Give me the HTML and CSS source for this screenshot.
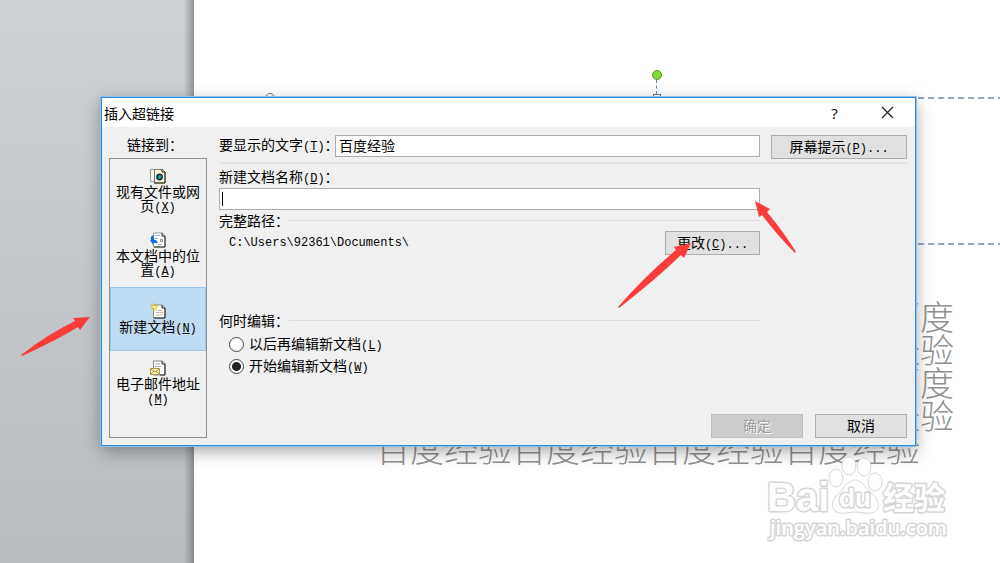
FILE: index.html
```html
<!DOCTYPE html>
<html lang="zh-CN">
<head>
    <meta charset="UTF-8">
    <meta name="viewport" content="width=device-width, initial-scale=1.0">
    <title>插入超链接</title>
    <link rel="stylesheet" href="styles.css">
</head>
<body>
    <div class="workspace"></div>
    <main class="slide">
        <div class="placeholder">
            <span class="corner"></span>
            <span class="rotate"></span>
            <span class="handle"></span>
        </div>
        <div class="slide-text">
            <p>百度<br>经验<br>百度<br>经验</p>
            <p class="last">百度经验百度经验百度经验百度经验</p>
        </div>
    </main>

    <form class="dialog" role="dialog" aria-labelledby="dialog-title">
        <div class="titlebar">
            <h1 id="dialog-title">插入超链接</h1>
            <button type="button" class="title-btn">?</button>
            <button type="button" class="title-btn" aria-label="关闭">
                <svg width="13" height="13" viewBox="0 0 13 13"><path d="M1 1L12 12M12 1L1 12" stroke="#222" stroke-width="1.2"/></svg>
            </button>
        </div>
        <div class="dialog-body">
            <div class="link-to">
                <div class="link-label">链接到：</div>
                <div class="link-list">
                    <button type="button" class="link-item">
                        <svg width="16" height="16" viewBox="0 0 16 16">
                            <path d="M.5 1.500h6v12h-6z" fill="#f4f4f0" stroke="#999"/>
                            <path d="M4.500 1.500h8l2.500 2.500v11H4.500z" fill="#fff8c8" stroke="#777"/>
                            <path d="M15 4v11H4M12 1v3h3" fill="none" stroke="#222"/>
                            <circle cx="9.500" cy="9" r="3.400" fill="#12305c"/>
                            <path d="M8 8l2-1 1.500 1.500-1 2-2 .5z" fill="#1fae8a"/>
                        </svg>
                        <span>现有文件或网<br>页<kbd>(<u>X</u>)</kbd></span>
                    </button>
                    <button type="button" class="link-item">
                        <svg width="16" height="16" viewBox="0 0 16 16">
                            <path d="M3.500 1h9l2.500 3v11H3.500z" fill="#fff" stroke="#999"/>
                            <path d="M15 4v11H4M12 1v3h3" fill="none" stroke="#222"/>
                            <path d="M5 3.500h5M5 6.500h3M8 12.500h4" stroke="#8ab6f0"/>
                            <path d="M10.500 7.500h2v2h-2z" fill="#fff" stroke="#888"/>
                            <path d="M3.500 3Q0 4 1 8L0 8l3 5v-2h5L6 8H4.500Q3 6 3.500 3z" fill="#1767d8"/>
                        </svg>
                        <span>本文档中的位<br>置<kbd>(<u>A</u>)</kbd></span>
                    </button>
                    <button type="button" class="link-item selected">
                        <svg width="16" height="16" viewBox="0 0 16 16">
                            <path d="M3.500 2h9L15 5v10H3.500z" fill="#fffdf2" stroke="#888"/>
                            <path d="M15 5v10H4M12 2v3h3" fill="none" stroke="#222"/>
                            <path d="M8 7.500h4M6 9.500h7M6 12h7" stroke="#bbb"/>
                            <path d="M4 0v8M0 4h8M1 1l6 6M7 1L1 7" stroke="#d9b526"/>
                            <circle cx="4" cy="4" r="1.500" fill="#fff6a0"/>
                        </svg>
                        <span>新建文档<kbd>(<u>N</u>)</kbd></span>
                    </button>
                    <button type="button" class="link-item">
                        <svg width="16" height="16" viewBox="0 0 16 16">
                            <path d="M3.500 1h9L15 4v11H3.500z" fill="#fff" stroke="#888"/>
                            <path d="M15 4v11h-5M12 1v3h3" fill="none" stroke="#222"/>
                            <path d="M5 4h5M5 6.500h6" stroke="#aaa"/>
                            <path d="M.5 8.500h9v6h-9z" fill="#fdf3a8" stroke="#a99750"/>
                            <path d="M1 9l4 3L9 9M1 14l3-3M9 14l-3-3" fill="none" stroke="#a99750"/>
                        </svg>
                        <span>电子邮件地址<br><kbd>(<u>M</u>)</kbd></span>
                    </button>
                </div>
            </div>

            <div class="settings">
                <div class="text-row">
                    <label for="display-text">要显示的文字<kbd>(<u>T</u>)</kbd>：</label>
                    <input type="text" class="field" id="display-text" value="百度经验">
                    <button type="button" class="btn btn-tip">屏幕提示<kbd>(<u>P</u>)...</kbd></button>
                </div>
                <div class="document">
                    <label class="name-label" for="doc-name">新建文档名称<kbd>(<u>D</u>)</kbd>：</label>
                    <div class="name-field">
                        <input type="text" class="field" id="doc-name">
                        <span class="caret"></span>
                    </div>
                    <div class="group-title">完整路径：</div>
                    <div class="path-row">
                        <kbd class="path">C:\Users\92361\Documents\</kbd>
                        <button type="button" class="btn btn-change">更改<kbd>(<u>C</u>)...</kbd></button>
                    </div>
                    <div class="group-title when">何时编辑：</div>
                    <label class="choice"><input type="radio" name="when"><span>以后再编辑新文档<kbd>(<u>L</u>)</kbd></span></label>
                    <label class="choice"><input type="radio" name="when" checked><span>开始编辑新文档<kbd>(<u>W</u>)</kbd></span></label>
                </div>
                <div class="actions">
                    <button type="submit" class="btn" disabled>确定</button>
                    <button type="button" class="btn">取消</button>
                </div>
            </div>
        </div>

        <svg class="arrow arrow-name" width="42" height="54" viewBox="0 0 42 54"><path d="M0 0L15 8 12 11Q28 30 41 51L40 52Q22 34 7 14L4 16Z"/></svg>
        <svg class="arrow arrow-change" width="76" height="68" viewBox="0 0 76 68"><path d="M74 2L67 17 64 14Q38 39 2 67L1 66Q28 35 59 9L57 6Z"/></svg>
    </form>

    <svg class="arrow arrow-new" width="70" height="42" viewBox="0 0 70 42"><path d="M69 1L59 14 57 11Q34 25 1 40L0 39Q27 18 54 5L52 2Z"/></svg>

    <svg class="watermark" width="190" height="96" viewBox="0 0 190 96" role="img" aria-label="Baidu 经验">
        <g class="paw">
            <ellipse cx="73" cy="38" rx="7" ry="9"/>
            <ellipse cx="86" cy="26" rx="7" ry="9"/>
            <ellipse cx="101" cy="27" rx="7" ry="9"/>
            <ellipse cx="112" cy="42" rx="7" ry="9"/>
            <path d="M92 40C85 40 82 47 77 52 71 57 67 64 71 70 77 76 85 72 92 72 99 72 108 76 114 70 118 64 113 57 107 52 102 47 99 40 92 40Z"/>
        </g>
        <text class="brand" x="4" y="71">Bai</text>
        <text class="du" x="76" y="67">du</text>
        <text class="cn" x="120" y="69">经验</text>
        <text class="url" x="7" y="95">jingyan.baidu.com</text>
    </svg>
</body>
</html>
```
FILE: styles.css
```css
* { box-sizing: border-box; }
body { margin: 0; min-height: 100vh; display: flex; position: relative; overflow: hidden; font-family: "Liberation Sans", "Noto Sans CJK SC", sans-serif; font-size: 14px; color: #000; }
button, input { font: inherit; color: inherit; }
button { padding: 0; }
kbd { font-family: "Liberation Mono", monospace; font-size: 12px; line-height: 1; }

/* editor behind the dialog */
.workspace { width: 194px; background: linear-gradient(90deg, transparent 184px, rgba(70,75,80,0.45)), linear-gradient(#cdd1d6, #b9bdc2); }
.slide { flex: 1; position: relative; overflow: hidden; background: #fff; }
.placeholder { position: absolute; top: 97px; left: 75px; right: -44px; height: 148px; border: 2px dashed #8fa6c0; }
.corner { position: absolute; left: -6px; top: -6px; width: 10px; height: 10px; border: 1px solid #777; border-radius: 50%; background: #fff; }
.rotate { position: absolute; left: 50%; top: -29px; margin-left: -5px; width: 10px; height: 10px; border: 1px solid #5b8d3c; border-radius: 50%; background: #83dc2c; }
.rotate::after { content: ""; position: absolute; left: 3px; top: 9px; height: 14px; border-left: 1px dashed #6486a8; }
.handle { position: absolute; left: 50%; top: -5px; margin-left: -4px; width: 8px; height: 8px; border: 1px solid #5f7d9c; background: #fff; }
.slide-text { padding: 299px 46px 0 0; text-align: right; font-family: "Noto Sans CJK SC", sans-serif; font-size: 34px; line-height: 33px; font-weight: 300; color: #909090; white-space: nowrap; }
.slide-text p { margin: 0; }
.slide-text .last { padding-right: 34px; }

/* dialog */
.dialog { position: absolute; top: 97px; left: 101px; right: 84px; border: 1px solid #2f8ad8; background: #f0f0f0; box-shadow: 0 0 0 1px #8fc1ec, 0 5px 16px rgba(0,0,0,0.35); }
.titlebar { display: flex; align-items: center; height: 29px; padding: 0 1px 0 2px; background: #fff; }
.titlebar h1 { flex: 1; margin: 0; font-size: 14px; font-weight: 400; }
.title-btn { width: 53px; height: 28px; border: none; background: none; font-family: "Open Sans", sans-serif; font-size: 15px; }
.dialog-body { display: grid; grid-template-columns: 98px 1fr; gap: 12px; padding: 8px 8px 7px 7px; }
.link-to { display: flex; flex-direction: column; }
.link-label { height: 23px; padding-left: 18px; line-height: 20px; }
.link-list { flex: 1; border: 1px solid #8c9198; }
.link-item { display: flex; flex-direction: column; align-items: center; justify-content: center; gap: 1px; width: 100%; height: 64px; border: 1px solid transparent; background: none; line-height: 14px; }
.link-item span { white-space: nowrap; }
.link-item.selected { border-color: #99c9ef; background: #c0dcf3; }

.settings { display: flex; flex-direction: column; }
.text-row { display: flex; align-items: flex-start; height: 29px; border-bottom: 2px solid #e3e3e3; line-height: 20px; }
.text-row label { width: 116px; white-space: nowrap; }
.text-row .field { flex: 1; min-width: 0; }
.field { width: 100%; height: 22px; padding: 0 3px 2px; border: 1px solid #abadb3; background: #fff; outline: none; }
.btn { width: 92px; height: 24px; border: 1px solid #adadad; background: #e1e1e1; line-height: 20px; white-space: nowrap; }
.btn:disabled { border-color: #bfbfbf; background: #ccc; color: #9c9c9c; text-shadow: 1px 1px #fff; }
.btn-tip { width: 136px; margin-left: 11px; }
.btn-change { width: 95px; }
.document { margin-right: 147px; }
.name-label { display: block; margin-top: 4px; height: 20px; line-height: 18px; }
.name-field { display: flex; position: relative; }
.caret { position: absolute; left: 3px; top: 4px; width: 1px; height: 14px; background: #000; }
.group-title { display: flex; align-items: center; height: 21px; line-height: 20px; }
.group-title::after { content: ""; flex: 1; height: 1px; background: #dcdcdc; }
.when { margin: 55px 0 2px; }
.path-row { display: flex; justify-content: space-between; padding-left: 10px; }
.path { line-height: 24px; }
.choice { display: flex; align-items: center; height: 22px; padding-left: 10px; line-height: 20px; }
.choice input { appearance: none; width: 15px; height: 15px; margin: 0 5px 0 0; border: 1px solid #444; border-radius: 50%; background: #fff; }
.choice input:checked { background: radial-gradient(circle, #222 4px, #fff 5px); }
.actions { display: flex; justify-content: flex-end; gap: 12px; margin-top: 37px; }

/* arrows and watermark laid over the page */
.arrow { position: absolute; fill: #fc3b3b; pointer-events: none; }
.arrow-name { top: 103px; right: 118px; }
.arrow-change { top: 143px; right: 222px; }
.arrow-new { left: 21px; top: 316px; }
.watermark { position: absolute; right: 47px; top: 440px; overflow: visible; fill: #fff; stroke: #d6d6d6; pointer-events: none; }
.watermark text { paint-order: stroke; stroke-width: 3px; stroke-linejoin: round; }
.watermark .brand { font-family: "Liberation Sans", sans-serif; font-size: 40px; font-weight: 700; }
.watermark .du { font-family: "Liberation Sans", sans-serif; font-size: 26px; font-weight: 700; }
.watermark .cn { font-family: "Noto Sans CJK SC", sans-serif; font-size: 31px; font-weight: 700; }
.watermark .url { font-family: "Open Sans", sans-serif; font-size: 20px; font-weight: 600; }
```
